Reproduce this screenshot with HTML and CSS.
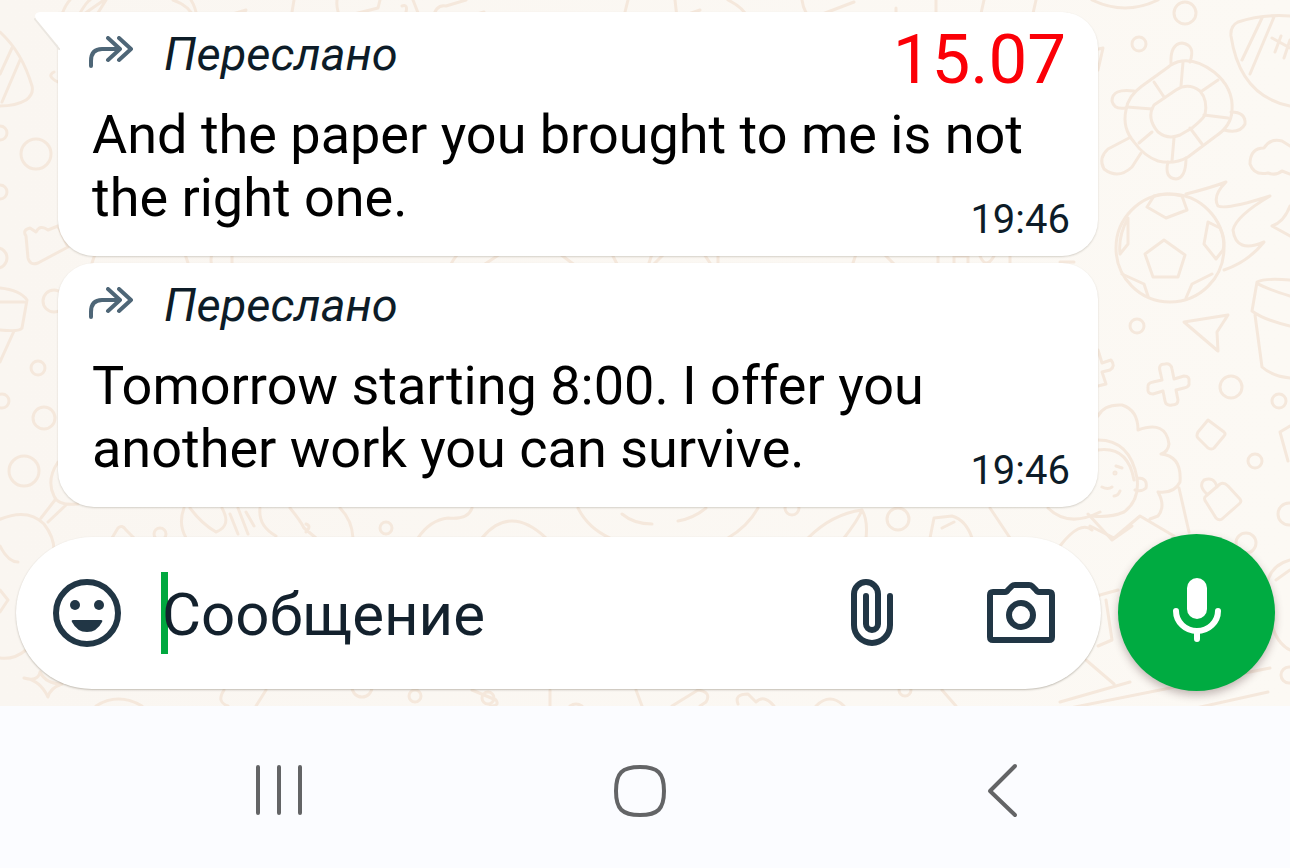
FILE: index.html
```html
<!DOCTYPE html>
<html lang="ru">
<head>
<meta charset="utf-8">
<meta name="viewport" content="width=device-width, initial-scale=1">
<title>Чат</title>
<link rel="stylesheet" href="styles.css">
</head>
<body>
<main class="chat">
  <svg class="wallpaper" viewBox="0 0 1290 707" preserveAspectRatio="xMidYMin slice" aria-hidden="true">
    <!-- left edge -->
    <path d="M0 32 Q22 52 32 86 Q34 94 26 100 Q16 106 0 106 M12 48L0 74 M20 60L2 102"/>
    <circle cx="36" cy="154" r="15"/><circle cx="0" cy="133" r="7"/><circle cx="0" cy="192" r="7"/><circle cx="-3" cy="258" r="10"/>
    <path d="M54 72Q46 76 58 82 M26 236Q22 230 30 228L36 232Q40 224 48 230L58 226 68 247 38 263Q30 266 28 258Z"/>
    <path d="M0 288Q20 290 27 300L22 328Q20 332 0 330M0 302H24M14 331L0 362"/>
    <circle cx="54" cy="301" r="11"/><circle cx="38" cy="368" r="7"/><circle cx="2" cy="401" r="7"/><circle cx="44" cy="418" r="11"/><circle cx="24" cy="471" r="15"/>
    <path d="M58 462Q46 480 54 496Q58 506 78 504M55 500L41 518M66 505L48 522M-6 522Q26 506 44 524Q64 550 44 576M0 546Q8 562 18 562M0 590L8 600 0 612M0 658Q14 660 26 650M24 678Q38 682 40 672Q46 684 62 684Q50 688 48 697Q40 680 24 678M96 706Q118 692 142 706"/>
    <!-- top edge -->
    <path d="M62 14Q66 4 70 0M76 20Q86 2 90 0M84 14L104 0M96 16L106 0M173 0Q190 6 194 18M191 0Q196 8 197 18M226 16L246 10 240 20M294 0L291 18M337 0Q336 10 341 18M354 14L378 8 380 0M402 6Q408 4 406 12M413 0L420 18M433 18Q436 4 446 6L466 0M470 16L484 12 478 18M628 0L624 16M675 0L677 18 700 10M728 0Q744 8 748 18M802 0Q804 14 812 18L854 2M896 18V8M936 18V0M984 0L980 18M1036 0L1032 18M1060 18Q1068 10 1078 20M1092 0Q1125 16 1158 0"/>
    <!-- strip between the bubbles -->
    <path d="M95 254L91 266M185 254L189 266M212 254Q210 260 212 266M232 254V266M450 266Q454 258 458 254M482 266L500 254M560 254L576 266M612 254L618 266M652 254L648 266M664 254L652 266M704 254L712 266M718 254V266M852 266L856 254M884 254L896 266M938 254V266M954 266V256H968V266M980 256Q986 270 994 256M1010 254V266M1060 262H1074"/>
    <!-- strip above the composer -->
    <path d="M112 538L118 528Q122 524 126 530L134 538M184 508Q178 524 186 538M190 508Q202 524 216 532Q232 526 222 508M230 514L238 534M238 508L248 534M246 512L254 526M260 508Q258 526 276 536M290 508Q300 520 304 528L316 538M306 524Q312 526 306 532M340 508Q352 520 353 538M418 538Q430 520 448 518Q468 520 472 508M482 538Q510 504 546 538M578 508Q588 528 610 538M622 514Q634 524 652 524M678 521Q694 518 706 508M758 508Q748 526 728 538M808 538Q832 514 862 510Q868 520 866 538M844 538Q858 520 862 510M930 538L934 518 952 516Q966 520 972 538M942 528L954 522M990 508L1010 538M1048 508Q1068 528 1100 512"/>
    <circle cx="160" cy="534" r="6"/><circle cx="386" cy="528" r="6"/><circle cx="792" cy="508" r="7"/><circle cx="898" cy="519" r="11"/>
    <!-- strip below the composer -->
    <path d="M224 690Q216 702 228 706M266 690L256 706M472 690L496 700Q500 706 490 706M550 690V706M636 690L642 706M672 706L698 690Q712 692 706 702L700 706M738 704Q734 694 748 694L756 702Q764 694 774 706M816 706Q830 692 844 706M942 690L956 706M570 706Q576 702 582 706"/>
    <circle cx="362" cy="687" r="10"/><circle cx="415" cy="696" r="6"/><circle cx="488" cy="698" r="6"/><circle cx="905" cy="690" r="6"/>
    <!-- turtle -->
    <g>
      <path d="M1182 61Q1197 59 1214 72Q1234 88 1232 111Q1231 126 1216 136L1188 157Q1174 165 1158 161Q1144 156 1134 142Q1122 128 1126 110Q1128 96 1142 86L1167 68Q1174 62 1182 61Z"/>
      <path d="M1154 105L1176 90Q1188 82 1200 91Q1208 100 1205 115Q1202 120 1192 128L1180 135Q1168 140 1158 132Q1146 118 1154 105Z"/>
      <path d="M1183 62L1181 86M1154 82L1164 97M1127 107L1152 109M1139 143L1152 132M1172 161L1174 138M1202 144L1190 128M1228 118L1204 115M1218 80L1202 91"/>
      <path d="M1171 64Q1170 44 1182 43Q1196 45 1190 62M1134 91Q1112 88 1112 101Q1114 110 1126 108M1231 112Q1246 112 1245 124Q1240 134 1224 130M1168 162Q1164 178 1176 179Q1186 178 1186 158M1129 138L1108 149Q1098 158 1104 169Q1118 180 1132 167L1141 153"/>
    </g>
    <circle cx="1185" cy="13" r="11"/><circle cx="1139" cy="44" r="7"/><path d="M1094 50L1103 48 1098 70"/>
    <!-- rugby ball and cloud -->
    <path d="M1290 16Q1262 14 1238 22Q1230 26 1231 36Q1240 96 1290 106M1262 18L1242 60M1274 17L1250 74M1272 38L1290 48M1281 36L1275 52M1290 40L1284 58"/>
    <path d="M1290 174L1282 171Q1276 176 1268 173Q1254 176 1250 164Q1250 148 1264 148Q1270 138 1282 141L1290 146"/>
    <!-- football with flames -->
    <circle cx="1170" cy="248" r="54"/>
    <path d="M1164 240L1185 255 1178 277H1153L1145 254ZM1147 207L1154 196Q1166 192 1182 196L1187 210 1166 218ZM1128 218Q1118 236 1120 254L1128 244ZM1208 222L1220 228Q1226 240 1223 250L1216 259 1204 244ZM1122 274L1144 284 1148 296M1186 298L1192 284 1212 274M1186 194Q1210 188 1226 182Q1212 196 1218 206Q1226 210 1270 196Q1236 216 1233 230Q1236 254 1264 242Q1248 262 1224 270M1290 206Q1284 222 1272 226L1290 236"/>
    <!-- cup -->
    <path d="M1290 280Q1264 278 1257 282L1252 311Q1264 320 1290 326M1257 283Q1264 288 1290 296M1255 315L1262 367Q1272 376 1290 378"/>
    <!-- small shapes on the right -->
    <circle cx="1137" cy="326" r="7"/><path d="M1184 322L1228 315 1217 332 1218 351Z"/>
    <path d="M1160 371Q1158 364 1165 364Q1171 363 1172 369L1174 379 1184 376Q1190 376 1189 382Q1190 387 1184 388L1176 390 1178 400Q1178 405 1172 405Q1166 406 1165 401L1163 391 1153 394Q1147 394 1148 388Q1147 383 1153 382L1162 380Z"/>
    <circle cx="1231" cy="387" r="11"/><circle cx="1279" cy="401" r="7"/><circle cx="1255" cy="461" r="7"/>
    <path d="M1208 420L1224 432Q1226 434 1224 436L1214 448Q1212 450 1208 448L1198 438Q1196 436 1198 432ZM1290 426L1280 432 1288 461M1206 502Q1203 498 1206 496L1220 484Q1224 482 1228 486L1240 499Q1242 502 1239 504L1222 519Q1219 521 1216 518ZM1207 494Q1198 486 1204 480Q1214 476 1217 487"/>
    <path d="M1098 350L1102 363 1111 360Q1116 366 1110 370L1102 372 1106 384 1098 386"/>
    <circle cx="1289" cy="514" r="11"/><circle cx="1246" cy="543" r="10"/>
    <!-- child with curly hair -->
    <path d="M1098 416Q1104 404 1122 405Q1138 410 1138 430Q1166 420 1169 444Q1168 452 1161 454Q1182 456 1180 482Q1174 494 1158 492Q1166 506 1158 516L1150 519M1098 440Q1130 440 1137 478Q1140 500 1124 512Q1110 518 1092 516M1098 450Q1128 446 1134 480M1138 478Q1148 478 1146 488Q1142 492 1135 490M1179 488L1189 532M1090 526L1114 538 1140 516 1174 536M1102 487Q1108 490 1112 487M1114 496Q1118 496 1120 491M1116 466L1122 468"/>
    <circle cx="1115" cy="473" r="1"/>
    <!-- behind the composer buttons -->
    <path d="M1088 514L1112 540 1132 526M1060 546Q1080 520 1092 530M1082 600L1118 590M1106 600L1112 640 1098 646M1086 660L1114 684M1060 702L1130 682M1070 708L1270 668M1196 708L1268 692M1290 560Q1262 568 1268 600Q1270 640 1290 650M1276 580L1290 570"/>
    <circle cx="1289" cy="675" r="8"/>
  </svg>

  <section class="messages" aria-label="Сообщения">
    <article class="bubble">
      <svg class="tail" viewBox="0 0 26 38" aria-hidden="true"><path class="tail-shade" d="M1 7L26 38"/><path d="M6 0H26V36L2 7Q-1 1 6 0Z"/></svg>
      <header class="bubble-head">
        <svg class="forward" viewBox="0 0 46 34" aria-hidden="true"><path d="M3 30V25Q3 13 14 13H31M20 2L32 13 20 24M31 2L43 13 31 24"/></svg>
        <em class="label">Переслано</em>
        <span class="date-note">15.07</span>
      </header>
      <p class="text">And the paper you brought to me is not the right one.<time class="time">19:46</time></p>
    </article>
    <article class="bubble">
      <header class="bubble-head">
        <svg class="forward" viewBox="0 0 46 34" aria-hidden="true"><path d="M3 30V25Q3 13 14 13H31M20 2L32 13 20 24M31 2L43 13 31 24"/></svg>
        <em class="label">Переслано</em>
      </header>
      <p class="text">Tomorrow starting 8:00. I offer you another work you can survive.<time class="time">19:46</time></p>
    </article>
  </section>

  <form class="composer">
    <div class="field">
      <button class="icon-button" type="button" aria-label="Эмодзи">
        <svg class="icon" viewBox="0 0 68 68"><circle class="line" cx="34" cy="34" r="31"/><circle class="solid" cx="22" cy="26" r="5"/><circle class="solid" cx="46" cy="26" r="5"/><path class="solid" d="M20 41H48Q50 41 49 43Q44 53 34 53Q24 53 19 43Q18 41 20 41Z"/></svg>
      </button>
      <div class="entry">
        <span class="caret"></span>
        <input class="input" type="text" placeholder="Сообщение" aria-label="Сообщение">
      </div>
      <button class="icon-button" type="button" aria-label="Прикрепить">
        <svg class="icon" viewBox="0 0 68 68"><path class="line" d="M52 17V46A18 18 0 0 1 16 46V15A12 12 0 0 1 40 15V45A6 6 0 0 1 28 45V17"/></svg>
      </button>
      <button class="icon-button camera" type="button" aria-label="Камера">
        <svg class="icon" viewBox="0 0 68 68"><path class="line" d="M6 13H18Q20 13 21 11L25 7Q26 6 28 6H42Q44 6 45 7L49 11Q50 13 52 13H62Q65 13 65 16V58Q65 61 62 61H6Q3 61 3 58V16Q3 13 6 13Z"/><circle class="line" cx="34" cy="36" r="12"/></svg>
      </button>
    </div>
    <button class="mic" type="button" aria-label="Голосовое сообщение">
      <svg class="mic-icon" viewBox="0 0 50 68"><rect class="mic-body" x="15" y="1" width="20" height="41" rx="10"/><path class="mic-stand" d="M4 34A21 20 0 0 0 46 34M25 54V62"/></svg>
    </button>
  </form>
</main>

<nav class="system-nav" aria-label="Навигация">
  <button class="nav-button" type="button" aria-label="Недавние"><svg class="nav-icon" viewBox="0 0 56 56"><path d="M7 4V50M28 4V50M49 4V50"/></svg></button>
  <button class="nav-button" type="button" aria-label="Домой"><svg class="nav-icon" viewBox="0 0 56 56"><path d="M28 4C46 4 52 10 52 28S46 52 28 52 4 46 4 28 10 4 28 4Z"/></svg></button>
  <button class="nav-button" type="button" aria-label="Назад"><svg class="nav-icon" viewBox="0 0 56 56"><path d="M41 3L16 28 41 52"/></svg></button>
</nav>
</body>
</html>
```
FILE: styles.css
```css
* {
  box-sizing: border-box;
}

body {
  display: flex;
  flex-direction: column;
  min-height: 100vh;
  margin: 0;
  background: #fbfcff;
  font-family: Roboto, "Noto Sans", sans-serif;
}

button {
  display: grid;
  place-items: center;
  padding: 0;
  border: 0;
  background: none;
}

svg {
  display: block;
  fill: none;
  stroke-linecap: round;
  stroke-linejoin: round;
}

.chat {
  position: relative;
  overflow: hidden;
  padding: 12px 15px 15px 16px;
  background: linear-gradient(90deg, #faf6f1, #fcf9f4);
}

.wallpaper {
  position: absolute;
  inset: 0;
  width: 100%;
  height: 100%;
  stroke: #f5e8dc;
  stroke-width: 3;
}

.messages {
  position: relative;
  display: flex;
  flex-direction: column;
  gap: 7px;
  margin: 0 177px 0 42px;
}

.bubble {
  position: relative;
  padding: 0 28px 12px 34px;
  border-radius: 36px;
  background: #fff;
  box-shadow: 0 1px 2px rgba(60, 50, 30, 0.2);
}

.bubble:first-child {
  border-top-left-radius: 0;
}

.tail {
  position: absolute;
  top: 0;
  left: -24px;
  width: 26px;
  height: 38px;
  fill: #fff;
}

.tail-shade {
  stroke: #ebe7e1;
  stroke-width: 2;
}

.bubble-head {
  display: flex;
  align-items: center;
  height: 82px;
  margin-bottom: 9px;
}

.forward {
  width: 46px;
  height: 34px;
  margin-left: -4px;
  stroke: #4e6677;
  stroke-width: 4;
}

.label {
  margin-left: 30px;
  color: #0d1c28;
  font-size: 47px;
}

.date-note {
  margin: 14px 4px 0 auto;
  color: #fb0007;
  font-size: 69px;
  line-height: 70px;
}

.text {
  display: flow-root;
  margin: 0;
  color: #000;
  font-size: 54px;
  line-height: 63px;
}

.time {
  float: right;
  margin-top: 30px;
  color: #0d1c28;
  font-size: 40px;
  line-height: 48px;
}

.composer {
  position: relative;
  display: flex;
  align-items: center;
  gap: 17px;
  margin-top: 27px;
}

.field {
  display: flex;
  flex: 1;
  align-items: center;
  min-width: 0;
  height: 152px;
  padding: 0 46px 0 37px;
  border-radius: 76px;
  background: #fff;
  box-shadow: 0 1px 2px rgba(60, 50, 30, 0.3);
}

.icon {
  width: 68px;
  height: 68px;
}

.camera {
  margin-left: 81px;
}

.line {
  stroke: #213645;
  stroke-width: 6;
}

.solid {
  fill: #213645;
}

.entry {
  position: relative;
  flex: 1;
  min-width: 0;
  margin-left: 40px;
}

.caret {
  position: absolute;
  top: 0;
  left: 0;
  width: 7px;
  height: 82px;
  background: #00a83f;
}

.input {
  position: relative;
  display: block;
  width: 100%;
  height: 82px;
  padding: 4px 0 0 1px;
  border: 0;
  outline: 0;
  background: none;
  color: #13212d;
  font-family: inherit;
  font-size: 60px;
}

.input::placeholder {
  color: #13212d;
  opacity: 1;
}

.mic {
  width: 157px;
  height: 157px;
  border-radius: 50%;
  background: #00ab41;
  box-shadow: 0 4px 8px rgba(60, 30, 30, 0.3);
}

.mic-icon {
  width: 50px;
  height: 68px;
  margin-bottom: 4px;
}

.mic-body {
  fill: #fff;
}

.mic-stand {
  stroke: #fff;
  stroke-width: 6;
}

.system-nav {
  display: grid;
  flex: 1;
  grid-template-columns: repeat(3, 1fr);
  align-items: center;
  justify-items: center;
  padding: 8px 107px 0 98px;
}

.nav-icon {
  width: 56px;
  height: 56px;
  stroke: #636466;
  stroke-width: 4;
}
```
